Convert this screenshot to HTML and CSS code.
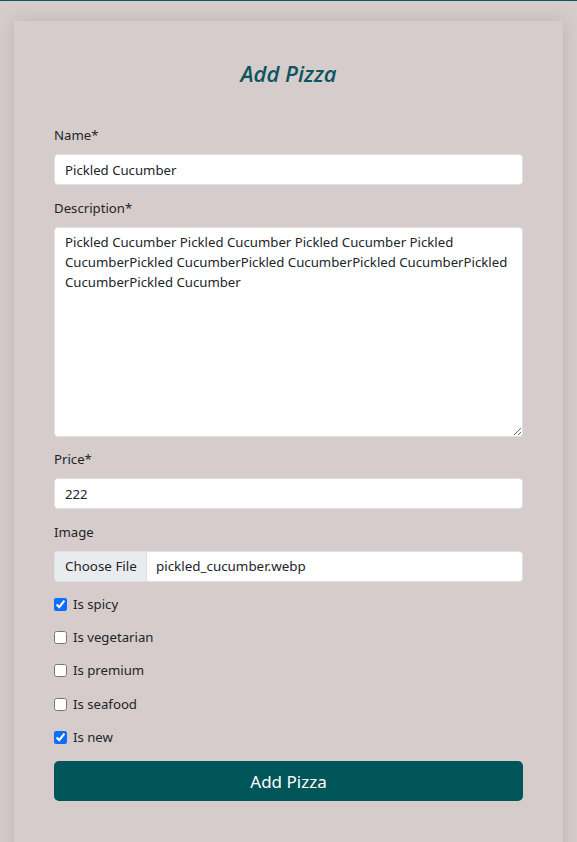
FILE: index.html
```html
<!DOCTYPE html>
<html lang="en">
<head>
<meta charset="utf-8">
<title>Add Pizza</title>
<link rel="stylesheet" href="styles.css">
</head>
<body>
<div class="topline"></div>
<main class="page">
  <section class="card">
    <h2 class="title">Add Pizza</h2>
    <form class="form">
      <div class="field">
        <label class="label">Name*</label>
        <input class="control" type="text" value="Pickled Cucumber">
      </div>
      <div class="field">
        <label class="label">Description*</label>
        <textarea class="control area">Pickled Cucumber Pickled Cucumber Pickled Cucumber Pickled CucumberPickled CucumberPickled CucumberPickled CucumberPickled CucumberPickled Cucumber</textarea>
      </div>
      <div class="field">
        <label class="label">Price*</label>
        <input class="control" type="text" value="222">
      </div>
      <div class="field">
        <label class="label">Image</label>
        <div class="file">
          <span class="file-btn">Choose File</span>
          <span class="file-name">pickled_cucumber.webp</span>
        </div>
      </div>
      <div class="checks">
        <label class="check"><input type="checkbox" checked><span>Is spicy</span></label>
        <label class="check"><input type="checkbox"><span>Is vegetarian</span></label>
        <label class="check"><input type="checkbox"><span>Is premium</span></label>
        <label class="check"><input type="checkbox"><span>Is seafood</span></label>
        <label class="check"><input type="checkbox" checked><span>Is new</span></label>
      </div>
      <button class="submit" type="button">Add Pizza</button>
    </form>
  </section>
</main>
</body>
</html>
```
FILE: styles.css
```css
* { box-sizing: border-box; }
html, body {
  margin: 0;
  padding: 0;
  background: #d6cccb;
  font-family: "Noto Sans", "Open Sans", sans-serif;
  color: #212529;
  font-size: 13.2px;
  overflow: hidden;
}
.topline {
  height: 1px;
  background: #0b5a5e;
}
.page {
  padding: 20px 14px 0;
}
.card {
  background: #d6cccb;
  box-shadow: 0 0 16px rgba(0, 0, 0, 0.13);
  padding: 32px 40px 60px;
  min-height: 900px;
}
.title {
  margin: 0 0 32px;
  text-align: center;
  font-family: "Open Sans", sans-serif;
  font-style: italic;
  font-weight: 600;
  font-size: 22px;
  line-height: 40px;
  color: #0b5560;
}
.form {
  display: flex;
  flex-direction: column;
  gap: 12.5px;
}
.field {
  display: flex;
  flex-direction: column;
}
.label {
  font-size: 13.2px;
  line-height: 21px;
  margin-bottom: 8px;
}
.control {
  display: block;
  width: 100%;
  height: 31px;
  padding: 4px 10px;
  font-family: "Noto Sans", sans-serif;
  font-size: 13.2px;
  line-height: 21px;
  color: #212529;
  background: #fff;
  border: 1px solid #dee2e6;
  border-radius: 4px;
  outline: none;
}
.area {
  height: 210px;
  line-height: 20px;
  resize: vertical;
}
.file {
  display: flex;
  height: 31px;
  background: #fff;
  border: 1px solid #dee2e6;
  border-radius: 4px;
  overflow: hidden;
  line-height: 29px;
  font-size: 13.4px;
}
.file-btn {
  width: 92px;
  padding-left: 10px;
  background: #e9ecef;
  border-right: 1px solid #dee2e6;
}
.file-name {
  padding-left: 9px;
}
.checks {
  display: flex;
  flex-direction: column;
  gap: 12.2px;
}
.check {
  display: flex;
  align-items: center;
  height: 21px;
  line-height: 21px;
}
.check input {
  width: 13px;
  height: 13px;
  margin: 0 6px 0 0;
  accent-color: #0d6efd;
}
.submit {
  margin-top: 1px;
  height: 40px;
  width: 100%;
  border: none;
  border-radius: 5px;
  background: #005558;
  color: #fff;
  font-family: "Noto Sans", sans-serif;
  font-size: 17px;
}
```
